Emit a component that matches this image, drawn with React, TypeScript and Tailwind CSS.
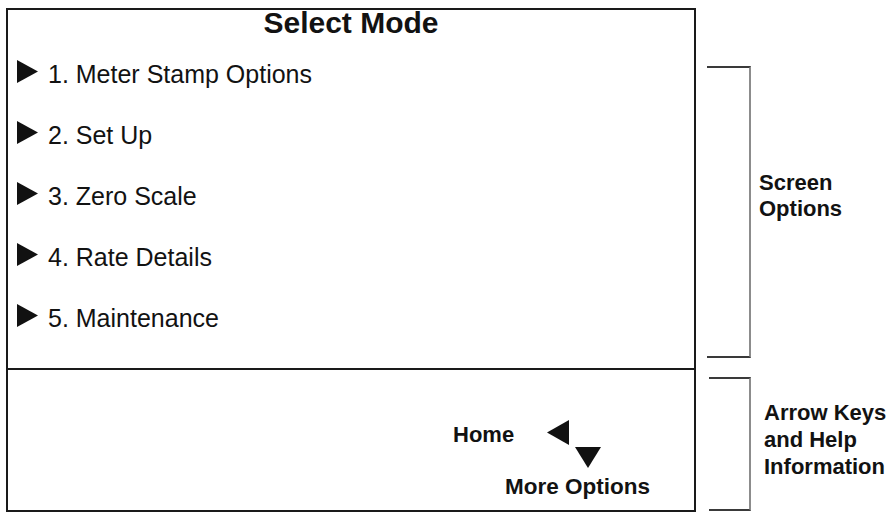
import React from "react";

function TriRight() {
  return (
    <svg width="21" height="23" viewBox="0 0 21 23" className="shrink-0 ml-[9px] -mt-[2px]">
      <polygon points="0,0 21,11.5 0,23" fill="#111" />
    </svg>
  );
}

const items = [
  "1. Meter Stamp Options",
  "2. Set Up",
  "3. Zero Scale",
  "4. Rate Details",
  "5. Maintenance",
];

export default function App() {
  return (
    <div className="w-[893px] h-[512px] bg-white flex overflow-hidden font-['Liberation_Sans',Arial,sans-serif] text-[#121212]">
      <div className="ml-[6px] mt-[8px] w-[690px] h-[504px] shrink-0 border-2 border-[#1a1a1a] flex flex-col">
        <div className="h-[360px] border-b-2 border-[#1a1a1a] flex flex-col">
          <div className="text-center text-[30px] font-bold leading-[26px]">Select Mode</div>
          <div className="mt-[26px] flex flex-col gap-[36px]">
            {items.map((t) => (
              <div key={t} className="flex items-start">
                <TriRight />
                <span className="ml-[10px] text-[25px] leading-[25px] whitespace-nowrap">{t}</span>
              </div>
            ))}
          </div>
        </div>
        <div className="h-[140px] flex flex-col pt-[50px]">
          <div className="flex items-start ml-[445px]">
            <span className="mt-[4px] text-[22px] font-bold leading-[22px]">Home</span>
            <svg width="22" height="25" viewBox="0 0 22 25" className="ml-[33px] shrink-0">
              <polygon points="22,0 0,12.5 22,25" fill="#111" />
            </svg>
          </div>
          <svg width="26" height="21" viewBox="0 0 26 21" className="ml-[567px] mt-[1px] shrink-0">
            <polygon points="0,0 26,0 13,21" fill="#111" />
          </svg>
          <div className="ml-[497px] mt-[8px] text-[22.5px] font-bold leading-[22px] whitespace-nowrap">
            More Options
          </div>
        </div>
      </div>
      <div className="flex flex-col">
        <div className="flex mt-[66px] ml-[11px]">
          <div className="w-[44px] h-[292px] border-t-2 border-b-2 border-r-2 border-t-[#3a3a3a] border-b-[#3a3a3a] border-r-[#8c8c8c]" />
          <div className="ml-[8px] mt-[104px] text-[22px] font-bold leading-[26px] whitespace-nowrap">
            <div>Screen</div>
            <div>Options</div>
          </div>
        </div>
        <div className="flex mt-[19px] ml-[13px]">
          <div className="w-[42px] h-[134px] border-t-2 border-b-2 border-r-2 border-t-[#3a3a3a] border-b-[#3a3a3a] border-r-[#8c8c8c]" />
          <div className="ml-[13px] mt-[22px] text-[22px] font-bold leading-[27px] whitespace-nowrap">
            <div>Arrow Keys</div>
            <div>and Help</div>
            <div>Information</div>
          </div>
        </div>
      </div>
    </div>
  );
}
